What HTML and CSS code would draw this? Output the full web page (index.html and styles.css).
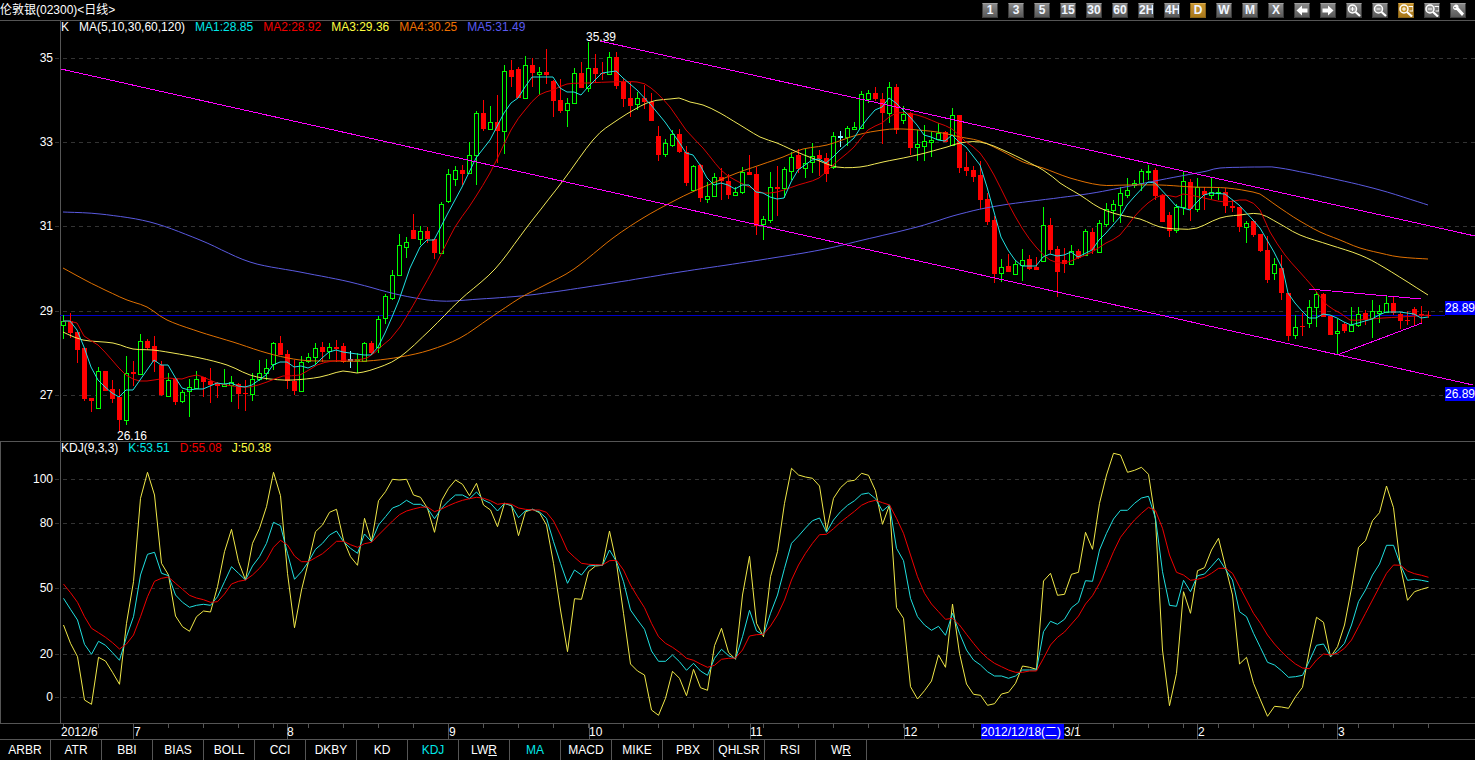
FILE: index.html
```html
<!DOCTYPE html>
<html>
  <head>
    <title>伦敦银(02300)</title>
    <meta charset="utf-8">
    <link rel="stylesheet" href="styles.css">
  </head>
  <body>
    <div class="toolbar">
      <div class="title">伦敦银(02300)&lt;日线&gt;</div>
      <div class="buttons">
        <div class="btn">1</div>
        <div class="btn">3</div>
        <div class="btn">5</div>
        <div class="btn">15</div>
        <div class="btn">30</div>
        <div class="btn">60</div>
        <div class="btn">2H</div>
        <div class="btn">4H</div>
        <div class="btn active">D</div>
        <div class="btn">W</div>
        <div class="btn">M</div>
        <div class="btn">X</div>
        <div class="btn"><svg viewBox="0 0 16 15"><path d="M2.5 7.5L8 2.5V5.5H13.5V9.5H8V12.5Z" fill="#fff"/></svg></div>
        <div class="btn"><svg viewBox="0 0 16 15"><path d="M13.5 7.5L8 2.5V5.5H2.5V9.5H8V12.5Z" fill="#fff"/></svg></div>
        <div class="btn"><svg viewBox="0 0 16 15"><circle cx="6.5" cy="6" r="4" fill="#999" stroke="#fff" stroke-width="1.5"/><path d="M4.5 6H8.5M6.5 4V8" stroke="#fff"/><path d="M9.5 9L14 13" stroke="#fff" stroke-width="2.2"/></svg></div>
        <div class="btn"><svg viewBox="0 0 16 15"><circle cx="6.5" cy="6" r="4" fill="#999" stroke="#fff" stroke-width="1.5"/><path d="M4.5 6H8.5" stroke="#fff"/><path d="M9.5 9L14 13" stroke="#fff" stroke-width="2.2"/></svg></div>
        <div class="btn active"><svg viewBox="0 0 16 15"><circle cx="6" cy="6" r="4" fill="#c8962e" stroke="#fff" stroke-width="1.5"/><path d="M4 6H8M6 4V8" stroke="#fff"/><path d="M9 9L14 13.5" stroke="#fff" stroke-width="2.2"/><path d="M10.5 3.5H15V8H11.5" fill="none" stroke="#fff"/></svg></div>
        <div class="btn"><svg viewBox="0 0 16 15"><circle cx="6" cy="6" r="4" fill="#999" stroke="#fff" stroke-width="1.5"/><path d="M4 6H8" stroke="#fff"/><path d="M9 9L14 13.5" stroke="#fff" stroke-width="2.2"/><path d="M10.5 3.5H15V8H11.5" fill="none" stroke="#fff"/></svg></div>
        <div class="btn"><svg viewBox="0 0 16 15"><path d="M3 3.5L5.5 1.5C7.5 1 9 2.5 8.5 4.5L14 10.5L12 13L6.5 7C4.5 7.5 2.5 6 3 3.5L5 5.5L6.5 4.5Z" fill="#fff"/></svg></div>
      </div>
    </div>

    <div class="panel main-panel">
      <svg id="price_chart" class="chart" viewBox="0 21 1475 420"></svg>
      <div class="legend">
        <span>K</span>
        <span>MA(5,10,30,60,120)</span>
        <span class="cyan">MA1:28.85</span>
        <span class="red">MA2:28.92</span>
        <span class="yellow">MA3:29.36</span>
        <span class="orange">MA4:30.25</span>
        <span class="blue">MA5:31.49</span>
      </div>
    </div>

    <div class="panel kdj-panel">
      <svg id="kdj_chart" class="chart" viewBox="0 442 1475 281"></svg>
      <div class="legend">
        <span>KDJ(9,3,3)</span>
        <span class="cyan">K:53.51</span>
        <span class="red">D:55.08</span>
        <span class="yellow">J:50.38</span>
      </div>
    </div>

    <svg id="time_axis" class="axis" viewBox="0 724 1475 15"></svg>

    <div class="tabs">
      <div class="tab">ARBR</div>
      <div class="tab">ATR</div>
      <div class="tab">BBI</div>
      <div class="tab">BIAS</div>
      <div class="tab">BOLL</div>
      <div class="tab">CCI</div>
      <div class="tab">DKBY</div>
      <div class="tab">KD</div>
      <div class="tab current">KDJ</div>
      <div class="tab">LW<u>R</u></div>
      <div class="tab current">MA</div>
      <div class="tab">MACD</div>
      <div class="tab">MIKE</div>
      <div class="tab">PBX</div>
      <div class="tab">QHLSR</div>
      <div class="tab">RSI</div>
      <div class="tab">W<u>R</u></div>
    </div>

    <script src="chart.js"></script>
  </body>
</html>
```

FILE: styles.css
```css
html, body {
  margin: 0;
  height: 760px;
  overflow: hidden;
  background-color: #000;
  color: #fff;
  font: 12px "Liberation Sans", "Noto Sans CJK SC", sans-serif;
}
.toolbar {
  display: flex;
  justify-content: space-between;
  align-items: center;
  height: 20px;
  border-bottom: 1px solid #555;
}
.title {
  padding-top: 1px;
  line-height: 19px;
}
.buttons {
  display: flex;
  gap: 10px;
  padding-right: 9px;
}
.btn {
  width: 16px;
  height: 15px;
  box-sizing: border-box;
  border: 1px solid #3c3c3c;
  border-top-color: #a0a0a0;
  background: linear-gradient(#8a8a8a, #707070 50%, #585858);
  font-weight: bold;
  line-height: 13px;
  text-align: center;
  color: #f0f6ff;
  overflow: hidden;
}
.btn.active {
  border-color: #8a6418;
  border-top-color: #d8aa50;
  background: linear-gradient(#c8962e, #b8862a 50%, #a87818);
}
.btn svg {
  display: block;
  width: 16px;
  height: 15px;
  margin: -1px;
}
.panel {
  position: relative;
}
.main-panel {
  height: 420px;
  border-bottom: 1px solid #555;
}
.kdj-panel {
  height: 281px;
  border-bottom: 1px solid #555;
}
.chart, .axis {
  display: block;
  width: 1475px;
  overflow: visible;
}
.chart {
  height: 100%;
}
.axis {
  height: 15px;
}
.legend {
  position: absolute;
  top: -1px;
  left: 61px;
  display: flex;
  gap: 10px;
  line-height: 14px;
  white-space: nowrap;
}
.cyan { color: #00e8e8; }
.red { color: #f00000; }
.yellow { color: #ffff40; }
.orange { color: #f07000; }
.blue { color: #5a5af0; }
.tabs {
  display: flex;
  height: 20px;
  border-top: 1px solid #555;
}
.tab {
  width: 50px;
  border-right: 1px solid #555;
  line-height: 20px;
  text-align: center;
}
.tab.current {
  color: #00e8e8;
}
svg text {
  font: 12px "Liberation Sans", "Noto Sans CJK SC", sans-serif;
  fill: #fff;
}
.grid {
  stroke: #333;
  stroke-dasharray: 4 4;
  shape-rendering: crispEdges;
}
.frame {
  stroke: #555;
  shape-rendering: crispEdges;
}
.curve {
  fill: none;
  stroke-width: 1;
  stroke-linejoin: round;
}
.trend {
  stroke: #ff00ff;
  stroke-width: 1;
  fill: none;
  shape-rendering: crispEdges;
}
.wick, .body {
  shape-rendering: crispEdges;
}
```

FILE: chart.js
```javascript
var NS = "http://www.w3.org/2000/svg";

function add(svg, tag, attrs, text) {
  var el = document.createElementNS(NS, tag);
  for (var key in attrs) el.setAttribute(key, attrs[key]);
  if (text) el.textContent = text;
  svg.appendChild(el);
  return el;
}

function curve(svg, points, color) {
  add(svg, "polyline", {
    "class": "curve",
    stroke: color,
    points: points.map(p => p[0] + "," + p[1]).join(" ")
  });
}

// the slow averages were read at a few points only, so round them off
function smooth(points) {
  var out = [];
  for (var i = 0; i < points.length - 1; i++) {
    var p0 = points[Math.max(i - 1, 0)], p1 = points[i];
    var p2 = points[i + 1], p3 = points[Math.min(i + 2, points.length - 1)];
    var steps = Math.max(Math.round((p2[0] - p1[0]) / 7), 1);
    for (var s = 0; s < steps; s++) {
      var t = s / steps, t2 = t * t, t3 = t2 * t;
      out.push([0, 1].map(a => (.5 * (2 * p1[a] + (p2[a] - p0[a]) * t +
        (2 * p0[a] - 5 * p1[a] + 4 * p2[a] - p3[a]) * t2 +
        (3 * p1[a] - p0[a] - 3 * p2[a] + p3[a]) * t3)).toFixed(1)));
    }
  }
  out.push(points[points.length - 1]);
  return out;
}

// high, body top, body bottom, low, colour - in page pixels, one per bar
var bars = [
  [315,321,325,339,"g"],[313,321,333,338,"r"],[332,332,350,363,"r"],[348,348,399,401,"r"],[398,398,401,412,"r"],
  [367,371,408,409,"g"],[371,371,391,391,"r"],[380,389,399,403,"r"],[389,397,420,432,"r"],[356,373,420,425,"g"],
  [361,372,374,386,"r"],[334,341,374,375,"g"],[339,341,348,350,"r"],[336,346,362,372,"r"],[361,365,395,396,"r"],
  [373,380,396,396,"g"],[378,379,402,405,"r"],[390,392,401,403,"g"],[379,387,391,417,"g"],[371,379,388,389,"g"],
  [377,377,382,397,"r"],[368,381,385,403,"r"],[382,383,386,398,"r"],[369,384,386,387,"g"],[376,382,385,402,"g"],
  [383,384,394,409,"r"],[380,393,394,411,"r"],[373,379,394,401,"g"],[360,373,379,381,"g"],[359,368,373,380,"g"],
  [342,343,364,370,"g"],[336,343,355,355,"r"],[350,354,381,389,"r"],[360,381,391,395,"r"],[356,362,391,392,"g"],
  [353,357,361,363,"g"],[343,348,357,365,"g"],[342,347,352,362,"r"],[343,347,351,359,"g"],[340,347,349,362,"r"],
  [343,346,362,363,"r"],[351,359,360,368,"w"],[353,359,360,373,"g"],[342,343,361,361,"g"],[341,343,353,355,"r"],
  [316,319,347,353,"g"],[294,296,318,324,"g"],[270,275,298,300,"g"],[234,245,275,276,"g"],[237,242,247,258,"g"],
  [214,230,239,239,"r"],[226,231,239,245,"g"],[227,231,239,243,"r"],[239,239,253,259,"r"],[202,204,253,253,"g"],
  [169,174,201,203,"g"],[166,170,179,186,"g"],[165,170,174,185,"r"],[142,155,173,173,"g"],[111,113,155,185,"g"],
  [100,113,129,131,"r"],[106,122,129,129,"g"],[95,122,131,163,"r"],[65,71,131,154,"g"],[60,70,77,87,"r"],
  [67,69,98,98,"r"],[56,65,98,99,"g"],[58,65,73,87,"r"],[67,72,74,95,"g"],[49,72,75,84,"r"],
  [80,81,101,117,"r"],[79,100,111,113,"r"],[98,103,110,127,"g"],[68,73,103,104,"g"],[62,73,88,88,"r"],
  [42,68,88,92,"g"],[54,68,74,83,"r"],[62,73,74,80,"r"],[52,57,74,75,"g"],[52,57,86,89,"r"],
  [78,82,99,107,"r"],[82,98,106,117,"r"],[92,98,104,110,"g"],[85,98,102,109,"r"],[93,102,121,121,"r"],
  [126,136,155,161,"r"],[139,143,154,157,"g"],[130,134,145,147,"g"],[129,134,152,153,"r"],[146,152,183,186,"r"],
  [165,166,190,190,"g"],[164,165,198,202,"r"],[182,196,199,203,"g"],[173,177,196,197,"g"],[168,177,181,200,"r"],
  [174,181,195,199,"r"],[187,192,195,196,"g"],[167,172,192,194,"g"],[155,172,175,175,"r"],[167,174,226,235,"r"],
  [216,219,224,240,"g"],[172,187,220,223,"g"],[166,187,189,216,"r"],[167,169,188,198,"g"],[152,157,171,180,"g"],
  [149,155,169,173,"r"],[149,163,168,178,"g"],[143,156,162,173,"g"],[150,155,159,176,"r"],[153,158,174,182,"r"],
  [132,136,167,169,"g"],[131,136,137,147,"w"],[126,128,137,146,"g"],[122,127,129,129,"g"],[91,94,128,129,"g"],
  [90,93,99,103,"g"],[87,93,99,101,"r"],[93,99,113,144,"r"],[82,87,113,123,"g"],[84,87,130,134,"r"],
  [106,114,120,124,"g"],[112,113,148,155,"r"],[130,144,147,161,"g"],[125,141,146,161,"g"],[132,140,142,157,"g"],
  [123,133,139,139,"g"],[131,132,142,142,"r"],[108,115,145,145,"g"],[115,115,168,173,"r"],[152,167,171,176,"r"],
  [166,170,177,182,"r"],[161,175,200,209,"r"],[193,199,222,225,"r"],[216,220,274,283,"r"],[259,267,273,282,"g"],
  [254,266,272,272,"r"],[260,264,274,274,"g"],[249,260,265,281,"g"],[255,259,269,270,"r"],[257,267,270,270,"r"],
  [207,225,261,261,"g"],[218,225,250,254,"r"],[246,249,272,297,"r"],[248,260,264,273,"r"],[245,251,264,264,"g"],
  [249,251,258,259,"r"],[229,231,255,255,"g"],[228,232,250,254,"r"],[220,223,252,252,"g"],[203,209,224,227,"g"],
  [200,204,210,222,"g"],[187,193,205,223,"g"],[178,190,195,198,"g"],[180,183,185,188,"g"],[169,171,183,191,"g"],
  [165,171,172,180,"g"],[168,170,196,200,"r"],[194,195,222,222,"r"],[212,215,231,237,"r"],[204,207,230,233,"g"],
  [172,181,207,215,"g"],[179,182,209,221,"r"],[178,187,209,212,"g"],[187,191,195,210,"r"],[178,192,195,199,"g"],
  [188,192,193,200,"g"],[188,192,206,213,"r"],[200,206,208,212,"r"],[207,207,227,232,"r"],[221,223,227,243,"g"],
  [221,221,235,237,"r"],[234,234,251,252,"r"],[236,250,280,283,"r"],[258,264,273,280,"g"],[255,268,293,300,"r"],
  [293,293,336,341,"r"],[315,327,335,339,"g"],[313,326,327,336,"r"],[300,307,323,328,"g"],[292,294,307,327,"g"],
  [293,294,317,317,"r"],[316,316,335,335,"r"],[319,331,333,355,"g"],[322,324,331,333,"r"],[307,325,331,331,"g"],
  [307,314,325,327,"g"],[310,313,320,325,"r"],[300,311,318,338,"g"],[305,311,313,323,"g"],[296,303,312,313,"g"],
  [297,303,313,315,"r"],[312,314,321,329,"r"],[311,320,321,325,"r"],[307,309,315,326,"r"],[306,314,315,323,"r"],
  [311,315,316,318,"r"]
];

var ma1 = [[63,321],[70,321],[77,330],[84,347],[91,367],[98,380],[105,387],[112,393],[119,397],[126,390],[133,390],[140,380],[147,370],[154,360],[161,365],[168,365],[175,377],[182,388],[189,390],[196,389],[203,389],[210,386],[217,383],[224,384],[231,383],[238,386],[245,387],[252,385],[259,380],[266,375],[273,365],[280,362],[287,362],[294,367],[301,366],[308,368],[315,365],[322,358],[329,352],[336,350],[343,352],[350,353],[357,354],[364,355],[371,355],[378,347],[385,333],[392,317],[399,300],[410,268],[420,247],[427,240],[434,240],[448,213],[462,187],[476,158],[490,140],[504,113],[511,103],[518,98],[525,87],[532,77],[553,77],[560,88],[567,92],[574,92],[581,95],[588,87],[595,80],[602,73],[616,71],[623,78],[637,90],[651,105],[665,122],[679,142],[686,153],[693,155],[700,165],[707,178],[714,185],[721,183],[728,185],[735,189],[742,185],[749,185],[756,192],[763,193],[770,197],[777,199],[784,198],[791,182],[798,170],[805,165],[812,160],[819,159],[826,163],[833,157],[840,150],[854,138],[861,127],[868,118],[875,110],[882,107],[889,98],[896,103],[903,110],[910,117],[917,125],[924,135],[931,137],[938,140],[945,141],[952,135],[959,142],[966,147],[980,165],[987,187],[994,212],[1001,237],[1008,250],[1015,260],[1022,266],[1036,266],[1043,257],[1050,254],[1057,256],[1064,255],[1071,252],[1078,257],[1092,250],[1099,240],[1106,233],[1120,217],[1127,205],[1134,197],[1148,182],[1155,183],[1169,198],[1176,206],[1190,210],[1197,202],[1204,195],[1211,193],[1225,194],[1239,205],[1253,220],[1260,228],[1267,240],[1274,252],[1283,270],[1288,293],[1295,303],[1302,311],[1309,318],[1316,318],[1323,314],[1330,315],[1337,318],[1344,322],[1351,325],[1358,323],[1365,321],[1372,319],[1379,315],[1386,312],[1393,312],[1400,312],[1407,313],[1414,314],[1421,318],[1428,317]];
var ma2 = [[63,321],[77,323],[84,336],[98,345],[112,360],[126,375],[140,381],[154,380],[168,378],[182,379],[197,375],[217,383],[233,386],[250,387],[267,382],[283,376],[300,375],[317,365],[333,361],[350,360],[367,358],[383,345],[400,327],[434,268],[455,227],[469,207],[490,173],[511,130],[525,110],[539,95],[553,90],[567,84],[588,83],[609,82],[637,82],[651,88],[670,107],[686,130],[703,148],[721,170],[735,180],[756,190],[763,193],[777,192],[798,185],[819,178],[833,165],[854,147],[868,130],[882,123],[896,113],[917,115],[938,123],[952,129],[966,142],[980,153],[994,175],[1008,203],[1022,228],[1036,247],[1050,260],[1064,263],[1078,258],[1092,252],[1106,243],[1120,235],[1134,217],[1148,203],[1162,195],[1176,197],[1183,194],[1204,198],[1225,202],[1246,200],[1260,210],[1270,232],[1285,255],[1298,270],[1313,287],[1327,305],[1340,313],[1350,320],[1370,319],[1383,318],[1400,317],[1417,316],[1428,315]];
var ma3 = [[63,332],[83,340],[113,343],[133,349],[153,350],[173,353],[200,358],[227,365],[250,375],[270,379],[293,380],[320,377],[343,371],[357,373],[377,368],[400,357],[430,330],[460,300],[495,269],[527,227],[562,182],[593,140],[613,123],[647,103],[670,99],[679,98],[690,102],[703,105],[720,113],[740,125],[760,137],[777,143],[797,152],[817,160],[837,167],[860,167],[883,162],[917,155],[947,147],[960,143],[980,142],[1003,150],[1043,170],[1060,183],[1080,195],[1100,208],[1120,215],[1140,219],[1160,227],[1180,229],[1197,228],[1220,218],[1240,215],[1260,214],[1280,224],[1300,235],[1330,245],[1360,255],[1385,268],[1428,295]];
var ma4 = [[63,268],[85,280],[105,290],[127,300],[147,307],[167,320],[200,332],[233,342],[267,353],[300,360],[333,361],[367,361],[400,357],[430,350],[460,338],[490,318],[520,298],[545,285],[574,269],[613,238],[643,218],[670,203],[690,193],[713,183],[737,173],[760,165],[783,157],[803,149],[827,145],[857,135],[883,130],[903,129],[937,132],[960,137],[980,141],[1000,150],[1023,162],[1043,168],[1070,178],[1100,185],[1127,185],[1160,185],[1193,187],[1227,188],[1253,192],[1260,194],[1280,208],[1300,221],[1320,232],[1340,240],[1360,248],[1380,253],[1400,257],[1428,259]];
var ma5 = [[63,212],[100,214],[150,222],[200,240],[250,262],[300,272],[350,282],[400,295],[440,301],[480,299],[530,295],[600,285],[680,272],[760,260],[820,250],[863,240],[917,227],[960,214],[1003,205],[1080,195],[1120,188],[1160,180],[1207,171],[1220,168],[1260,167],[1280,168],[1330,178],[1380,190],[1428,205]];

// KDJ values are read from a 3x crop, so page y = 440 + v / 3
var kdj_k = [475,508,540,613,643,604,616,638,661,590,530,405,343,337,400,407,465,487,502,496,493,496,470,425,380,400,420,378,350,310,247,257,340,418,395,365,328,310,285,273,305,325,340,282,305,255,230,204,196,181,193,193,205,236,205,183,165,165,176,156,180,190,213,
  190,197,233,212,208,216,235,305,370,430,390,405,378,376,376,330,365,425,510,540,568,633,664,664,645,665,691,670,693,706,655,628,647,656,590,511,573,585,520,465,385,310,288,264,242,234,277,240,215,196,182,163,159,176,213,195,325,362,475,530,555,571,559,586,520,580,630,660,675,695,708,708,
  715,708,690,690,690,575,544,553,538,503,487,422,424,330,280,237,211,211,190,174,169,235,395,496,499,421,455,407,402,379,355,388,420,515,530,580,623,667,675,692,712,710,706,662,616,612,649,633,610,555,485,450,405,372,316,316,375,421,418,421,425];
var kdj_d = [432,458,487,530,565,578,592,608,627,612,585,530,470,424,415,411,430,448,466,474,479,487,485,462,432,424,420,405,385,360,322,301,315,348,365,365,353,341,323,304,304,314,322,311,307,285,264,243,224,213,207,202,201,215,207,197,188,181,176,172,175,182,193,
  190,193,204,208,210,210,217,243,285,332,352,370,373,374,375,362,361,390,435,470,503,550,590,610,622,637,655,661,672,682,676,658,655,654,630,588,584,583,558,525,480,420,375,340,310,284,283,266,247,230,214,196,186,181,188,195,235,280,345,410,460,492,515,538,535,555,583,610,635,655,670,680,
  690,697,697,693,693,655,615,592,576,552,528,492,467,430,385,335,292,265,240,220,202,212,265,345,397,405,421,418,412,400,385,385,400,440,480,520,550,585,612,635,655,672,684,686,660,642,645,640,625,600,560,520,480,440,400,375,376,393,401,406,412];
var kdj_j = [555,610,650,780,793,652,663,697,733,550,425,175,97,165,370,405,528,560,574,530,513,516,440,335,268,365,420,310,265,200,97,167,400,563,450,365,275,255,217,208,300,350,376,235,305,182,155,118,120,118,165,172,205,277,182,145,120,133,167,130,195,210,260,
  190,197,287,215,208,218,255,370,510,635,476,478,395,378,376,273,370,520,672,693,705,810,826,775,694,715,767,688,743,751,617,565,637,658,465,349,550,590,410,335,190,85,105,111,115,138,272,175,143,124,121,100,106,152,253,195,503,535,740,777,752,723,645,682,492,640,732,763,766,796,791,762,
  757,730,678,682,688,423,400,466,463,403,397,277,328,190,105,40,45,97,91,82,103,240,630,797,700,455,520,392,383,330,295,380,465,672,652,730,780,829,799,801,805,770,742,630,532,547,651,620,555,445,322,302,242,218,138,203,380,481,455,448,442];

function draw_prices() {
  var svg = document.getElementById("price_chart");

  [[35,58],[33,142],[31,226],[29,311],[27,395]].forEach(g => {
    add(svg, "line", {"class": "grid", x1: 55, x2: 1475, y1: g[1] + .5, y2: g[1] + .5});
    add(svg, "text", {x: 53, y: g[1] + 4, "text-anchor": "end"}, String(g[0]));
  });
  add(svg, "line", {"class": "frame", x1: 60.5, x2: 60.5, y1: 21, y2: 441});
  add(svg, "line", {x1: 60, x2: 1445, y1: 315.5, y2: 315.5, stroke: "#0000c8", "shape-rendering": "crispEdges"});

  var colors = {r: "#ff0000", g: "#00ff00", w: "#7fffff"};
  bars.forEach((b, i) => {
    var x = 63.5 + 7 * i, c = colors[b[4]];
    if (b[4] == "r") {
      add(svg, "line", {"class": "wick", x1: x, x2: x, y1: b[0], y2: b[3], stroke: c});
      add(svg, "rect", {"class": "body", x: x - 2.5, y: b[1], width: 5, height: Math.max(b[2] - b[1], 1), fill: c});
    } else {
      add(svg, "line", {"class": "wick", x1: x, x2: x, y1: b[0], y2: b[1], stroke: c});
      add(svg, "line", {"class": "wick", x1: x, x2: x, y1: b[2], y2: b[3], stroke: c});
      add(svg, "rect", {"class": "body", x: x - 2, y: b[1] + .5, width: 4, height: Math.max(b[2] - b[1], 1), fill: "#000", stroke: c});
    }
  });

  curve(svg, smooth(ma5), "#5a5ae0");
  curve(svg, smooth(ma4), "#e07000");
  curve(svg, smooth(ma3), "#f0e858");
  curve(svg, smooth(ma2), "#d80000");
  curve(svg, ma1, "#20e0e0");

  [[61,69,1473,385],[600,41,1475,236],[1309,289,1421,299],[1337,355,1422,323]].forEach(t => {
    add(svg, "line", {"class": "trend", x1: t[0], y1: t[1], x2: t[2], y2: t[3]});
  });

  add(svg, "text", {x: 601, y: 41, "text-anchor": "middle"}, "35.39");
  add(svg, "text", {x: 132, y: 440, "text-anchor": "middle"}, "26.16");

  [["28.89",301],["26.89",387]].forEach(l => {
    add(svg, "rect", {x: 1445, y: l[1], width: 30, height: 14, fill: "#0000ff"});
    add(svg, "text", {x: 1445, y: l[1] + 10.5}, l[0]);
  });
}

function draw_kdj() {
  var svg = document.getElementById("kdj_chart");

  [[100,479],[80,523],[50,588],[20,654],[0,697]].forEach(g => {
    add(svg, "line", {"class": "grid", x1: 55, x2: 1475, y1: g[1] + .5, y2: g[1] + .5});
    add(svg, "text", {x: 53, y: g[1] + 4, "text-anchor": "end"}, String(g[0]));
  });
  add(svg, "line", {"class": "frame", x1: 60.5, x2: 60.5, y1: 442, y2: 723});
  add(svg, "line", {"class": "frame", x1: .5, x2: .5, y1: 442, y2: 723});

  var to_points = ys => ys.map((v, i) => [63.5 + 7 * i, (440 + v / 3).toFixed(1)]);
  curve(svg, to_points(kdj_j), "#f0e848");
  curve(svg, to_points(kdj_k), "#20e0e0");
  curve(svg, to_points(kdj_d), "#f00000");
}

function draw_axis() {
  var svg = document.getElementById("time_axis");

  for (var x = 63; x < 1430; x += 35) {
    add(svg, "line", {"class": "frame", x1: x + .5, x2: x + .5, y1: 724, y2: 728});
  }
  [133,287,448,589,750,904,1197,1337].forEach(x => {
    add(svg, "line", {"class": "frame", x1: x + .5, x2: x + .5, y1: 724, y2: 739});
  });

  [["2012/6",61],["7",134],["8",287],["9",449],["10",589],["11",750],["12",904],["3/1",1064],["2",1198],["3",1338]].forEach(l => {
    add(svg, "text", {x: l[1], y: 736}, l[0]);
  });

  add(svg, "rect", {x: 981, y: 724, width: 83, height: 15, fill: "#0000ff"});
  add(svg, "text", {x: 981, y: 736}, "2012/12/18(二)");
}

draw_prices();
draw_kdj();
draw_axis();
```
